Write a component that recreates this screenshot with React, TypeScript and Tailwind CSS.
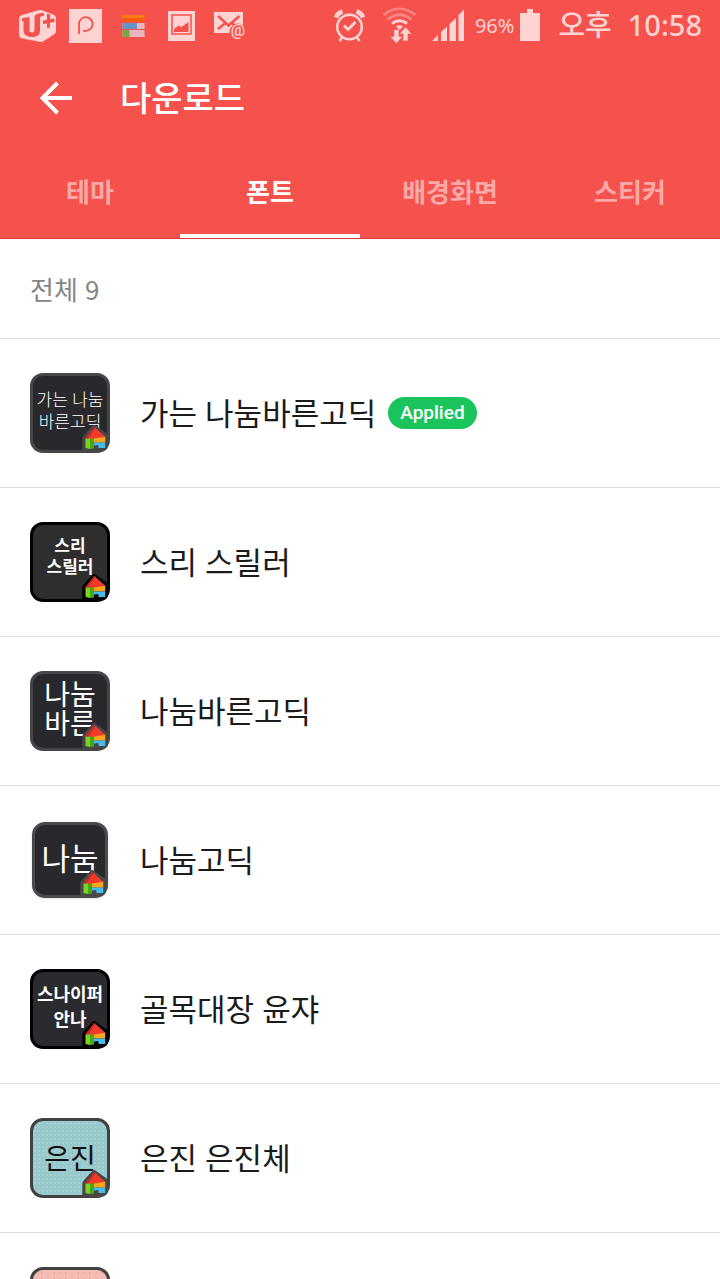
import React from "react";

type FontItem = {
  name: string;
  lines: string[];
  tile: string;
  text: string;
  outline: string;
  applied?: boolean;
};

const FONTS: FontItem[] = [
  {
    name: "가는 나눔바른고딕",
    lines: ["가는 나눔", "바른고딕"],
    tile: "size-20 border-[#464646] bg-[#29292d] pb-1",
    text: "text-[17px] leading-[22px] font-light text-white",
    outline: "#464646",
    applied: true,
  },
  {
    name: "스리 스릴러",
    lines: ["스리", "스릴러"],
    tile: "size-20 border-black bg-[#2e2e2e] pb-3",
    text: "text-[17px] leading-[21px] font-bold text-white",
    outline: "#000000",
  },
  {
    name: "나눔바른고딕",
    lines: ["나눔", "바른"],
    tile: "size-20 border-[#464646] bg-[#29292d] pb-1",
    text: "text-[28px] leading-[29px] font-normal text-white",
    outline: "#464646",
  },
  {
    name: "나눔고딕",
    lines: ["나눔"],
    tile: "size-[76px] border-[#4a4a4a] bg-[#29292d] pb-1 shadow-sm",
    text: "text-[31px] leading-[32px] font-normal text-white",
    outline: "#4a4a4a",
  },
  {
    name: "골목대장 윤쟈",
    lines: ["스나이퍼", "안나"],
    tile: "size-20 border-black bg-[#2b2b2f] pb-1",
    text: "text-[18px] leading-[25px] font-bold text-white",
    outline: "#000000",
  },
  {
    name: "은진 은진체",
    lines: ["은진"],
    tile: "size-20 border-[#414141] bg-[#97c8cb] bg-[radial-gradient(#a4d0d2_1px,transparent_1px)] bg-[size:4px_4px]",
    text: "text-[28px] leading-[30px] font-normal text-[#111]",
    outline: "#464646",
  },
  {
    name: "",
    lines: [],
    tile: "size-20 border-[#414141] bg-[#f4bcb2] bg-[radial-gradient(#eaaea5_1px,transparent_1px)] bg-[size:6px_6px]",
    text: "",
    outline: "#464646",
  },
];

const TABS = ["테마", "폰트", "배경화면", "스티커"];

function House({ outline }: { outline: string }) {
  return (
    <svg
      className="absolute -right-[3px] -bottom-[3px]"
      width="28"
      height="28"
      viewBox="52 52 28 28"
      aria-hidden="true"
    >
      <path d="M52.3 79V65.5Q52.3 64 53.4 62.8L62.3 53Q64 51.3 65.8 52.8L78 61.5V74Q77 78 70 79Z" fill={outline} />
      <path d="M55.5 65H60V76L55.5 75Z" fill="#7ad321" />
      <path d="M60 65H64V75.500L60 76Z" fill="#46a812" />
      <path d="M64 63.500H75.200V69.500H64Z" fill="#f9a618" />
      <path d="M64 69.500H75.200V75H68.500V72.500Q67 71.300 65.500 72.500H64Z" fill="#45bdec" />
      <path d="M55.300 65.500L64.300 54L75.300 63.800L64 65.500Z" fill="#f03a2c" />
      <path d="M55.300 65.500L64.300 54L65.500 55.300L58.500 65.500Z" fill="#c62c20" />
    </svg>
  );
}

function StatusBar() {
  const c = "#ffd3d1";
  const bg = "#f6524d";
  return (
    <div className="flex h-[50px] items-center justify-between pr-[18px] pl-[14px] text-[#ffd3d1]">
      <div className="flex" aria-hidden="true">
        <svg width="48" height="50" viewBox="0 0 48 50">
          <path d="M5 19q0-3 3-4L24 10.300q2-.6 4 0l11 4.200q3 1.200 3 4V31q0 2.500-2.500 3.800L29 41.500q-1.500.8-3.500.3L8.500 38.500Q5 38 5 34z" fill={c} />
          <path d="M8 18.200L15.500 17v13q0 2.500 2.500 2.500t2.500-2.500V17.500q0-2.700 3-3.500L29.500 12.500l.5 3-4 1.500v14q0 6-8.500 6-8 0-8-6.500V21.500L8 21z" fill={bg} />
          <path d="M33 13.500l3 1v4.500l4.500-.5v3.500l-4.500.8v5h-3v-4.300l-4 .5v-3.500l4-.7z" fill={bg} />
        </svg>
        <svg width="48" height="50" viewBox="0 0 48 50">
          <rect x="7" y="9" width="33" height="34" fill={c} />
          <path d="M17 34V24.500a6.800 6.800 0 1 1 6.800 6.300H21" fill="none" stroke={bg} strokeWidth="1.800" />
        </svg>
        <svg width="48" height="50" viewBox="0 0 48 50">
          <path d="M12.500 15h22v7h-22z" fill="#ff5a10" />
          <path d="M12.500 15h22v3h-22z" fill="#ff7d18" />
          <path d="M12.500 23h22v6h-22zM12.500 30h22v7h-22z" fill="#e8b5bd" />
          <path d="M12.500 23H27v6H12.500z" fill="#6595c8" />
          <path d="M12.500 30h7v7h-7z" fill="#77a843" />
        </svg>
        <svg width="48" height="50" viewBox="0 0 48 50">
          <rect x="10" y="11" width="27" height="30" fill={c} />
          <rect x="14" y="15" width="19" height="19" fill="none" stroke={bg} strokeWidth="1.500" />
          <path d="M16 32v-3l4.500-3.500 3 1.500 7-5v10z" fill={bg} />
        </svg>
        <svg width="48" height="50" viewBox="0 0 48 50">
          <rect x="8" y="12" width="29" height="21" fill={c} />
          <path d="M12 16l10.500 9.500L33.500 16M12 29l7.500-6M26 23l4 3.500" fill="none" stroke={bg} strokeWidth="2.500" />
          <circle cx="32" cy="32" r="8.500" fill={bg} />
          <text x="32" y="36" textAnchor="middle" fontSize="16" fontWeight="500" fontFamily="Roboto, sans-serif" fill={c}>@</text>
        </svg>
      </div>
      <div className="flex items-center">
        <svg width="50" height="50" viewBox="0 0 50 50" aria-hidden="true">
          <g fill="none" stroke={c} strokeWidth="2.500">
            <circle cx="24.500" cy="27" r="12.300" />
            <path d="M19 25.500l4 4 7.500-7.500" strokeWidth="3" />
            <path d="M11 17.500q1.500-4.500 6.500-6M38 17.500q-1.500-4.500-6.500-6" strokeWidth="4.500" />
            <path d="M17 37.500L14.500 41M32 37.500l2.500 3.500" />
          </g>
        </svg>
        <svg width="50" height="50" viewBox="0 0 50 50" aria-hidden="true">
          <g fill="none" stroke={c}>
            <path d="M8.500 15q16-12.500 32 0" strokeWidth="3" opacity=".35" />
            <path d="M12.500 19.500q12-9.500 24 0" strokeWidth="3" opacity=".4" />
            <path d="M17 23.500q7.500-5.500 15 0" strokeWidth="3" />
          </g>
          <path d="M21 26.500q3.500-2.500 7 0l-3.500 3.500z" fill={c} />
          <path d="M19 29.500h5v7h3.500L21.500 43.500l-6.500-7h4zM28 41v-7h-3.500l6-7 6.500 7H33V41z" fill={c} stroke={bg} strokeWidth=".6" />
        </svg>
        <svg width="50" height="50" viewBox="0 0 50 50" aria-hidden="true">
          <path d="M7 41l6-6v6zM16 41V32l6-5.500V41zM24.500 41V24l6.500-6V41zM33.500 41V15l5.500-5.500V41z" fill={c} />
        </svg>
        <span className="pt-[2px] text-[20px] leading-[48px]">96%</span>
        <svg className="ml-[6px]" width="20" height="50" viewBox="0 0 20 50" aria-hidden="true">
          <path d="M0 13h7V9h6v4h7v28H0z" fill={c} />
        </svg>
        <span className="ml-[18px] flex gap-4 text-[29px] leading-[50px] font-medium">
          <span>오후</span>
          <span>10:58</span>
        </span>
      </div>
    </div>
  );
}

export default function App() {
  return (
    <div
      lang="ko"
      className="flex h-screen flex-col overflow-hidden bg-white font-['Noto_Sans','Noto_Sans_CJK_KR',sans-serif] text-[#1b1b1b]"
    >
      <header className="shrink-0 border-b border-[#d43a38] bg-[#f6524d]">
        <StatusBar />
        <div className="flex h-24 items-center gap-8 pl-8 text-white">
          <button type="button" aria-label="뒤로" className="flex size-14 items-center">
            <svg width="48" height="48" viewBox="0 0 48 48" fill="none" stroke="currentColor" strokeWidth="4" aria-hidden="true">
              <path d="M40 24H11M25.500 9L10.500 24l15 15" />
            </svg>
          </button>
          <h1 className="text-[34px] leading-10 font-medium">다운로드</h1>
        </div>
        <nav className="grid h-[92px] grid-cols-4" role="tablist">
          {TABS.map((tab) => (
            <button
              key={tab}
              type="button"
              role="tab"
              aria-selected={tab === "폰트"}
              className="border-b-4 border-transparent pt-1 text-[26px] font-bold text-[#fba9a6] aria-selected:border-white aria-selected:text-white"
            >
              {tab}
            </button>
          ))}
        </nav>
      </header>
      <main className="min-h-0 flex-1 overflow-y-auto [scrollbar-width:none]">
        <p className="flex h-[100px] items-center border-b border-[#dedede] px-[30px] font-['Noto_Sans_CJK_KR',sans-serif] text-[26px] text-[#858585]">
          전체 9
        </p>
        <ul>
          {FONTS.map((font) => (
            <li key={font.name} className="flex h-[149px] items-center gap-[30px] border-b border-[#dedede] px-[30px]">
              <div className="flex w-20 shrink-0 justify-center">
                <div className={`relative flex flex-col items-center justify-center rounded-[13px] border-3 ${font.tile}`}>
                  {font.lines.map((line) => (
                    <span key={line} className={`whitespace-nowrap ${font.text}`}>
                      {line}
                    </span>
                  ))}
                  <House outline={font.outline} />
                </div>
              </div>
              <div className="flex items-center gap-3">
                <span className="text-[31px] leading-10">{font.name}</span>
                {font.applied && (
                  <span className="flex h-8 items-center rounded-full bg-[#19c45c] px-3 font-[Roboto,sans-serif] text-[19px] font-medium text-white">
                    Applied
                  </span>
                )}
              </div>
            </li>
          ))}
        </ul>
      </main>
    </div>
  );
}
